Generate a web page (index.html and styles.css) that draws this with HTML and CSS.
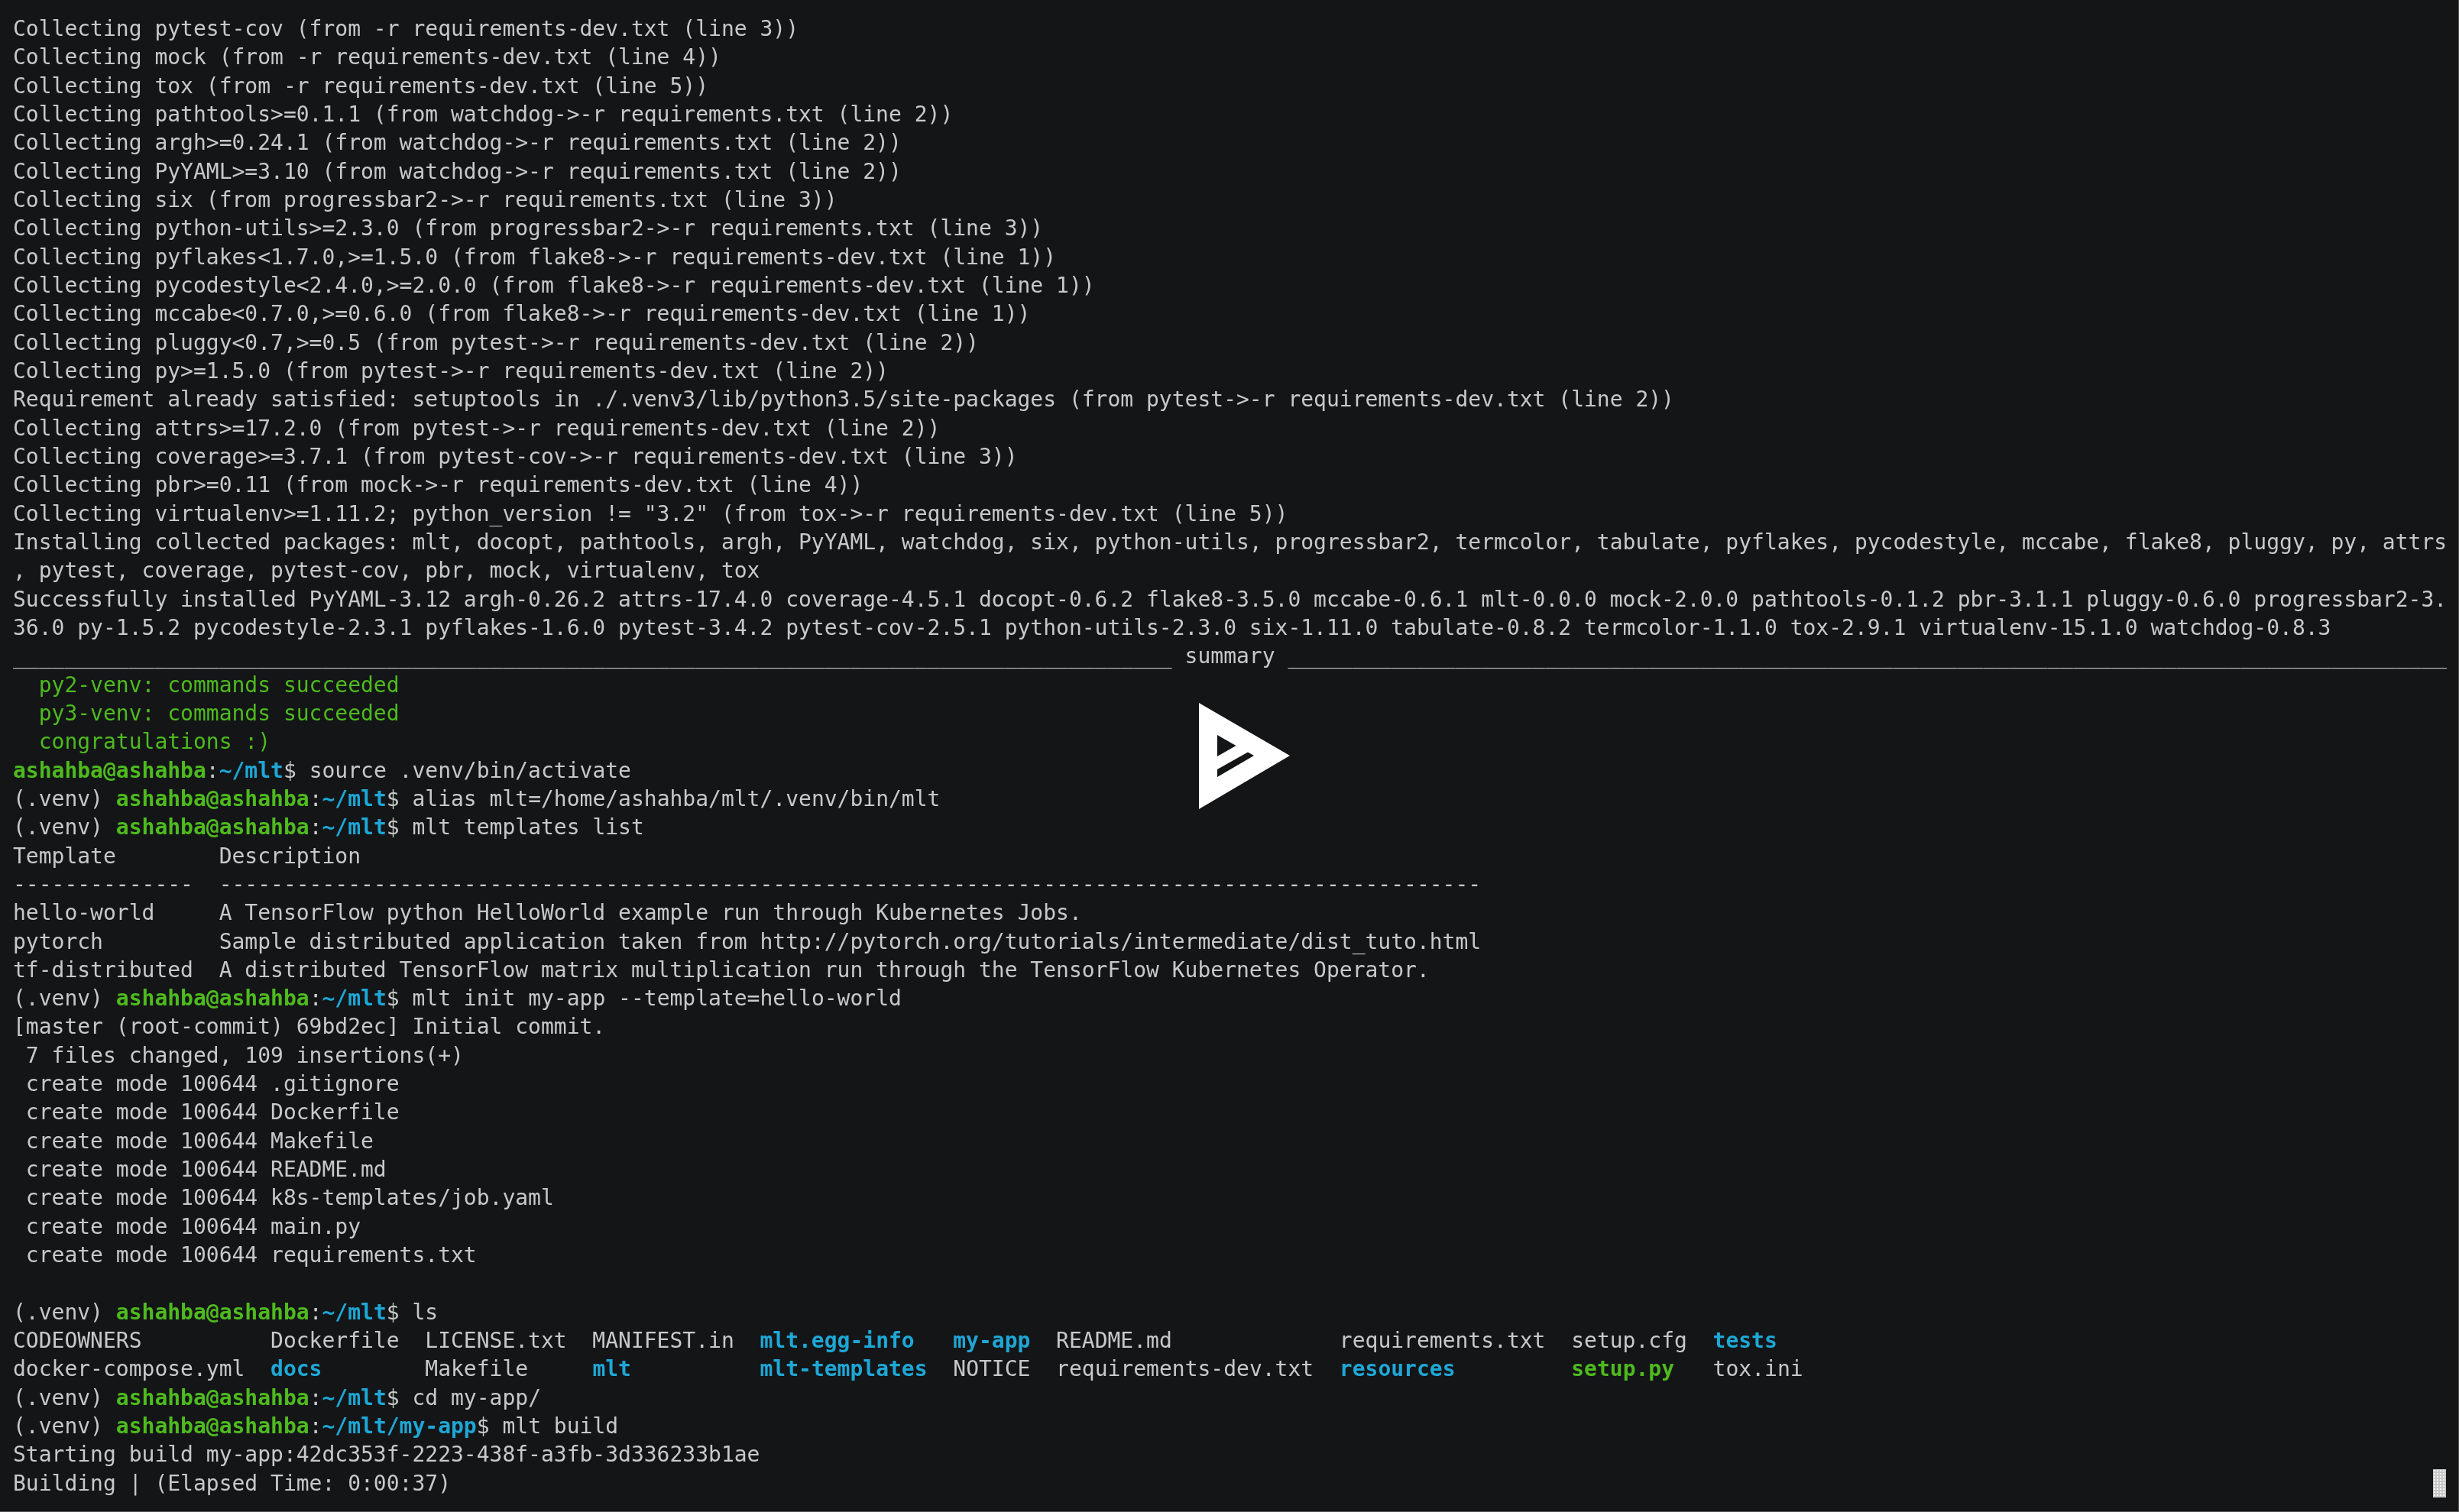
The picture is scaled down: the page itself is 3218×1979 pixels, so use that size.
FILE: index.html
```html
<!DOCTYPE html>
<html lang="en">
<head>
<meta charset="utf-8">
<title>Terminal</title>
<link rel="stylesheet" href="styles.css">
</head>
<body>
<main class="terminal">
<pre class="output">Collecting pytest-cov (from -r requirements-dev.txt (line 3))
Collecting mock (from -r requirements-dev.txt (line 4))
Collecting tox (from -r requirements-dev.txt (line 5))
Collecting pathtools&gt;=0.1.1 (from watchdog-&gt;-r requirements.txt (line 2))
Collecting argh&gt;=0.24.1 (from watchdog-&gt;-r requirements.txt (line 2))
Collecting PyYAML&gt;=3.10 (from watchdog-&gt;-r requirements.txt (line 2))
Collecting six (from progressbar2-&gt;-r requirements.txt (line 3))
Collecting python-utils&gt;=2.3.0 (from progressbar2-&gt;-r requirements.txt (line 3))
Collecting pyflakes&lt;1.7.0,&gt;=1.5.0 (from flake8-&gt;-r requirements-dev.txt (line 1))
Collecting pycodestyle&lt;2.4.0,&gt;=2.0.0 (from flake8-&gt;-r requirements-dev.txt (line 1))
Collecting mccabe&lt;0.7.0,&gt;=0.6.0 (from flake8-&gt;-r requirements-dev.txt (line 1))
Collecting pluggy&lt;0.7,&gt;=0.5 (from pytest-&gt;-r requirements-dev.txt (line 2))
Collecting py&gt;=1.5.0 (from pytest-&gt;-r requirements-dev.txt (line 2))
Requirement already satisfied: setuptools in ./.venv3/lib/python3.5/site-packages (from pytest-&gt;-r requirements-dev.txt (line 2))
Collecting attrs&gt;=17.2.0 (from pytest-&gt;-r requirements-dev.txt (line 2))
Collecting coverage&gt;=3.7.1 (from pytest-cov-&gt;-r requirements-dev.txt (line 3))
Collecting pbr&gt;=0.11 (from mock-&gt;-r requirements-dev.txt (line 4))
Collecting virtualenv&gt;=1.11.2; python_version != "3.2" (from tox-&gt;-r requirements-dev.txt (line 5))
Installing collected packages: mlt, docopt, pathtools, argh, PyYAML, watchdog, six, python-utils, progressbar2, termcolor, tabulate, pyflakes, pycodestyle, mccabe, flake8, pluggy, py, attrs
, pytest, coverage, pytest-cov, pbr, mock, virtualenv, tox
Successfully installed PyYAML-3.12 argh-0.26.2 attrs-17.4.0 coverage-4.5.1 docopt-0.6.2 flake8-3.5.0 mccabe-0.6.1 mlt-0.0.0 mock-2.0.0 pathtools-0.1.2 pbr-3.1.1 pluggy-0.6.0 progressbar2-3.
36.0 py-1.5.2 pycodestyle-2.3.1 pyflakes-1.6.0 pytest-3.4.2 pytest-cov-2.5.1 python-utils-2.3.0 six-1.11.0 tabulate-0.8.2 termcolor-1.1.0 tox-2.9.1 virtualenv-15.1.0 watchdog-0.8.3
__________________________________________________________________________________________ summary __________________________________________________________________________________________
<span class="ok">  py2-venv: commands succeeded
  py3-venv: commands succeeded
  congratulations :)</span>
<b class="user">ashahba@ashahba</b>:<b class="dir">~/mlt</b>$ source .venv/bin/activate
(.venv) <b class="user">ashahba@ashahba</b>:<b class="dir">~/mlt</b>$ alias mlt=/home/ashahba/mlt/.venv/bin/mlt
(.venv) <b class="user">ashahba@ashahba</b>:<b class="dir">~/mlt</b>$ mlt templates list
Template        Description
--------------  --------------------------------------------------------------------------------------------------
hello-world     A TensorFlow python HelloWorld example run through Kubernetes Jobs.
pytorch         Sample distributed application taken from http://pytorch.org/tutorials/intermediate/dist_tuto.html
tf-distributed  A distributed TensorFlow matrix multiplication run through the TensorFlow Kubernetes Operator.
(.venv) <b class="user">ashahba@ashahba</b>:<b class="dir">~/mlt</b>$ mlt init my-app --template=hello-world
[master (root-commit) 69bd2ec] Initial commit.
 7 files changed, 109 insertions(+)
 create mode 100644 .gitignore
 create mode 100644 Dockerfile
 create mode 100644 Makefile
 create mode 100644 README.md
 create mode 100644 k8s-templates/job.yaml
 create mode 100644 main.py
 create mode 100644 requirements.txt

(.venv) <b class="user">ashahba@ashahba</b>:<b class="dir">~/mlt</b>$ ls
CODEOWNERS          Dockerfile  LICENSE.txt  MANIFEST.in  <b class="dir">mlt.egg-info</b>   <b class="dir">my-app</b>  README.md             requirements.txt  setup.cfg  <b class="dir">tests</b>
docker-compose.yml  <b class="dir">docs</b>        Makefile     <b class="dir">mlt</b>          <b class="dir">mlt-templates</b>  NOTICE  requirements-dev.txt  <b class="dir">resources</b>         <b class="user">setup.py</b>   tox.ini
(.venv) <b class="user">ashahba@ashahba</b>:<b class="dir">~/mlt</b>$ cd my-app/
(.venv) <b class="user">ashahba@ashahba</b>:<b class="dir">~/mlt/my-app</b>$ mlt build
Starting build my-app:42dc353f-2223-438f-a3fb-3d336233b1ae
Building | (Elapsed Time: 0:00:37)</pre>
<svg class="logo" viewBox="0 0 119 139" aria-hidden="true"><path fill-rule="evenodd" fill="#fff" d="M0 0L119 69 0 139ZM24 42V70L48.500 56ZM24 87V97L72 69 64 64.500Z"/></svg>
<div class="cursor"></div>
</main>
</body>
</html>
```
FILE: styles.css
```css
html, body {
  margin: 0;
  padding: 0;
  background: #131517;
}
.terminal {
  position: relative;
  box-sizing: border-box;
  width: 3218px;
  height: 1979px;
  padding: 19px 0 0 17px;
  overflow: hidden;
  background: #131517;
  border-right: 1px solid #555;
  border-bottom: 1px solid #555;
}
.output {
  margin: 0;
  font-family: "DejaVu Sans Mono", monospace;
  font-size: 28px;
  line-height: 37.33px;
  letter-spacing: -0.005px;
  color: #c8c8c8;
  white-space: pre;
  filter: blur(0.4px);
}
.output b { font-weight: 700; }
.ok { color: #4eba1e; }
.user { color: #4eba1e; }
.dir { color: #1ea7d6; }
.logo {
  position: absolute;
  left: 1569px;
  top: 920px;
  width: 119px;
  height: 139px;
}
.cursor {
  position: absolute;
  left: 3184px;
  top: 1923px;
  width: 17px;
  height: 37px;
  background-color: #c8c8c8;
  background-image: radial-gradient(circle, #f4f4f4 0.7px, transparent 1px);
  background-size: 4px 4px;
}
```
